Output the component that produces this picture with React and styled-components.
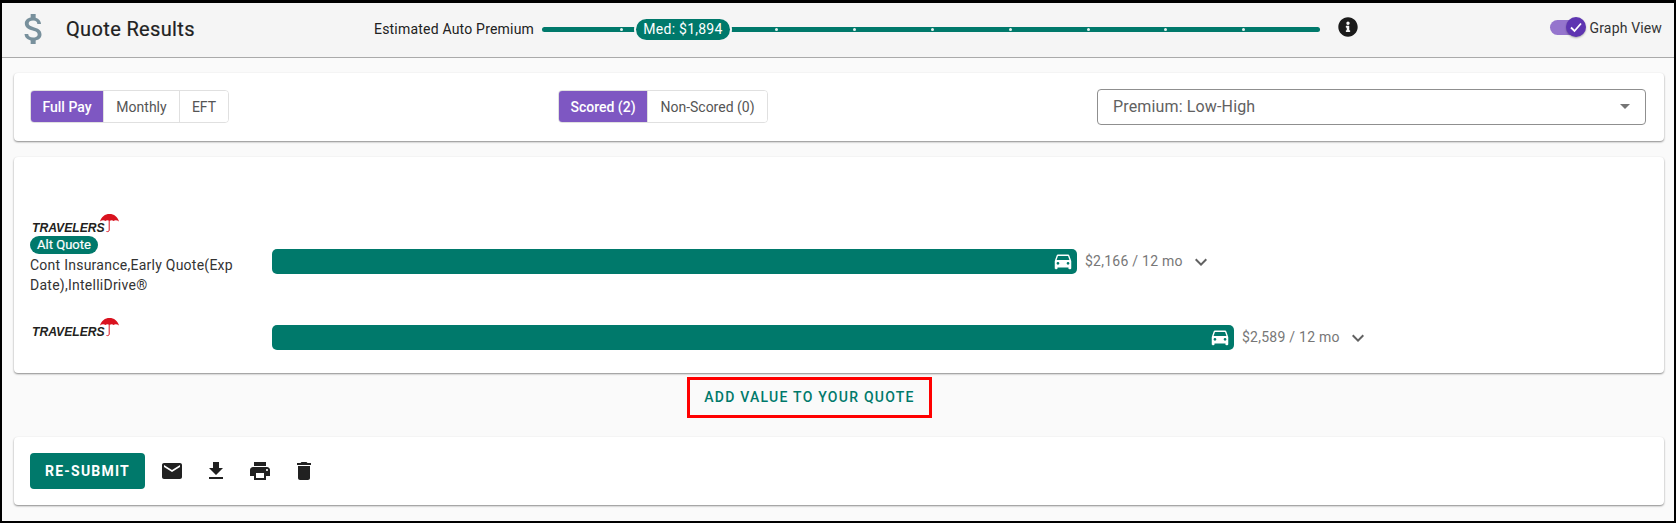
import React from 'react';
import styled, { createGlobalStyle } from 'styled-components';
import { FaInfoCircle } from 'react-icons/fa';

const GREEN = '#00796b';
const PURPLE = '#7e57c2';

const GlobalStyle = createGlobalStyle`
	html, body {
		margin: 0;
		padding: 0;
	}
	body {
		font-family: Roboto, "Liberation Sans", sans-serif;
		background: #fafafa;
	}
	* {
		box-sizing: border-box;
	}
`;

const Page = styled.div`
	width: 1676px;
	height: 523px;
	border: 2px solid #000;
	border-top-width: 3px;
	background: #fafafa;
	overflow: hidden;
`;

const Header = styled.header`
	height: 55px;
	display: flex;
	align-items: center;
	background: #f5f5f5;
	border-bottom: 1px solid #aaa;
	padding: 0 0 3px 12px;
`;

const DollarIcon = styled.svg`
	width: 40px;
	height: 40px;
	margin-top: 1px;
	fill: #78909c;
	flex: none;
`;

const Title = styled.h1`
	width: 308px;
	margin: 0 0 0 12px;
	font-size: 20px;
	font-weight: 400;
	letter-spacing: 0.35px;
	color: #212121;
	-webkit-text-stroke: 0.2px #212121;
`;

const SliderLabel = styled.span`
	width: 168px;
	font-size: 14px;
	letter-spacing: 0.2px;
	color: #212121;
`;

const Track = styled.div`
	position: relative;
	width: 778px;
	height: 5px;
	margin-top: 2px;
	border-radius: 3px;
	background: ${GREEN};
`;

const Tick = styled.i`
	position: absolute;
	top: 1px;
	width: 3px;
	height: 3px;
	border-radius: 50%;
	background: #e4f1ee;
	left: ${(p) => p.$at}px;
`;

const MedPill = styled.div`
	position: absolute;
	left: 94px;
	top: -8px;
	width: 94px;
	height: 21px;
	border-radius: 11px;
	background: ${GREEN};
	color: #fff;
	font-size: 14px;
	line-height: 20px;
	letter-spacing: 0.25px;
	text-align: center;
	box-shadow: 0 0 0 2px #f5f5f5;
`;

const InfoButton = styled.span`
	display: flex;
	margin: -4px 0 0 18px;
	font-size: 20px;
	color: #1a1a1a;
`;

const ToggleWrap = styled.div`
	margin-left: auto;
	display: flex;
	align-items: center;
	margin-right: 12px;
	margin-top: -2px;
`;

const ToggleTrack = styled.div`
	position: relative;
	width: 33px;
	height: 15px;
	border-radius: 8px;
	background: #9575cd;
`;

const ToggleThumb = styled.div`
	position: absolute;
	right: -3px;
	top: -3px;
	width: 20px;
	height: 20px;
	border-radius: 50%;
	background: #5e35b1;
	display: flex;
	align-items: center;
	justify-content: center;
	box-shadow: 0 1px 2px rgba(0, 0, 0, 0.3);
`;

const ToggleLabel = styled.span`
	margin-left: 7px;
	font-size: 14px;
	letter-spacing: 0.15px;
	color: #333;
`;

const Card = styled.section`
	margin: ${(p) => p.$top}px 10px 0 12px;
	background: #fff;
	border-radius: 4px;
	box-shadow: 0 1px 2px rgba(0, 0, 0, 0.45);
`;

const FilterCard = styled(Card)`
	height: 68px;
	display: flex;
	align-items: flex-start;
	padding: 17px 18px 0 16px;
`;

const ButtonGroup = styled.div`
	display: flex;
	height: 33px;
	margin-left: ${(p) => p.$left || 0}px;
	border: 1px solid #e0e0e0;
	border-radius: 4px;
	overflow: hidden;
`;

const GroupButton = styled.div`
	width: ${(p) => p.$w}px;
	display: flex;
	align-items: center;
	justify-content: center;
	font-size: 14px;
	font-weight: ${(p) => (p.$active ? 500 : 400)};
	color: ${(p) => (p.$active ? '#fff' : '#555')};
	background: ${(p) => (p.$active ? PURPLE : '#fff')};
	& + & {
		border-left: 1px solid #e0e0e0;
	}
`;

const SortSelect = styled.div`
	margin: -1px 0 0 auto;
	width: 549px;
	height: 36px;
	display: flex;
	align-items: center;
	justify-content: space-between;
	padding: 0 12px 2px 15px;
	border: 1px solid #8f8f8f;
	border-radius: 4px;
	font-size: 16px;
	letter-spacing: 0.15px;
	color: #616161;
`;

const CaretIcon = styled.svg`
	width: 24px;
	height: 24px;
	fill: #757575;
	margin-right: -4px;
`;

const ResultsCard = styled(Card)`
	height: 216px;
	padding: 57px 0 0 16px;
`;

const QuoteRow = styled.div`
	display: grid;
	grid-template-columns: 242px 1fr;
	align-items: center;
	height: ${(p) => p.$h}px;
`;

const Carrier = styled.div`
	align-self: start;
	padding-top: ${(p) => p.$top || 0}px;
`;

const LogoBox = styled.div`
	position: relative;
	width: 90px;
	height: 22px;
`;

const LogoText = styled.span`
	position: absolute;
	left: 2px;
	bottom: 1px;
	font-family: "Liberation Sans", sans-serif;
	font-size: 13.5px;
	line-height: 14px;
	font-weight: 700;
	font-style: italic;
	color: #231f20;
	transform: scaleX(0.9);
	transform-origin: left center;
`;

const Umbrella = styled.svg`
	position: absolute;
	left: 70px;
	top: 0;
	width: 19px;
	height: 19px;
`;

const AltBadge = styled.div`
	width: 68px;
	height: 18px;
	border-radius: 9px;
	background: ${GREEN};
	color: #fff;
	font-size: 13px;
	line-height: 18px;
	text-align: center;
	-webkit-text-stroke: 0.2px #fff;
`;

const DiscountText = styled.div`
	width: 210px;
	margin-top: 1px;
	font-size: 14px;
	line-height: 20px;
	letter-spacing: 0.25px;
	color: #333;
`;

const BarWrap = styled.div`
	display: flex;
	align-items: center;
`;

const Bar = styled.div`
	height: 25px;
	display: flex;
	align-items: center;
	justify-content: flex-end;
	padding-right: 3px;
	border-radius: 5px;
	background: ${GREEN};
`;

const CarIcon = styled.svg`
	width: 22px;
	height: 22px;
	margin-top: -2px;
	fill: #fff;
`;

const Price = styled.span`
	margin: 0 0 2px 8px;
	font-size: 14px;
	letter-spacing: 0.25px;
	color: #777;
`;

const Chevron = styled.svg`
	width: 24px;
	height: 24px;
	margin-left: 6px;
	fill: #616161;
`;

const AddValue = styled.div`
	width: 245px;
	height: 41px;
	margin: 4px 0 0 685px;
	padding-bottom: 2px;
	display: flex;
	align-items: center;
	justify-content: center;
	border: 3px solid #f00;
	font-size: 14px;
	font-weight: 500;
	letter-spacing: 1.25px;
	color: ${GREEN};
`;

const ActionCard = styled(Card)`
	height: 68px;
	display: flex;
	align-items: center;
	padding-left: 16px;
`;

const SubmitButton = styled.button`
	width: 115px;
	height: 36px;
	border: 0;
	border-radius: 4px;
	background: ${GREEN};
	color: #fff;
	font-family: inherit;
	font-size: 14px;
	font-weight: 700;
	letter-spacing: 1.2px;
	margin-right: 15px;
`;

const ActionIcon = styled.svg`
	width: 24px;
	height: 24px;
	margin-right: 20px;
	fill: #212121;
`;

const TICKS = [1, 3, 4, 5, 6, 7, 8, 9];

const CAR =
	'M18.92 6.01C18.72 5.42 18.16 5 17.5 5h-11c-.66 0-1.21.42-1.42 1.01L3 12v8c0 .55.45 1 1 1h1c.55 0 1-.45 1-1v-1h12v1c0 .55.45 1 1 1h1c.55 0 1-.45 1-1v-8l-2.08-5.99zM6.5 16c-.83 0-1.5-.67-1.5-1.5S5.67 13 6.5 13s1.5.67 1.5 1.5S7.33 16 6.5 16zm11 0c-.83 0-1.5-.67-1.5-1.5s.67-1.5 1.5-1.5 1.5.67 1.5 1.5-.67 1.5-1.5 1.5zM5 11l1.5-4.5h11L19 11H5z';

const ACTIONS = [
	'M20 4H4c-1.1 0-1.99.9-1.99 2L2 18c0 1.1.9 2 2 2h16c1.1 0 2-.9 2-2V6c0-1.1-.9-2-2-2zm0 4l-8 5-8-5V6l8 5 8-5v2z',
	'M19 9h-4V3H9v6H5l7 7 7-7zM5 18v2h14v-2H5z',
	'M19 8H5c-1.66 0-3 1.34-3 3v6h4v4h12v-4h4v-6c0-1.66-1.34-3-3-3zm-3 11H8v-5h8v5zm3-7c-.55 0-1-.45-1-1s.45-1 1-1 1 .45 1 1-.45 1-1 1zm-1-9H6v4h12V3z',
	'M6 19c0 1.1.9 2 2 2h8c1.1 0 2-.9 2-2V7H6v12zM19 4h-3.5l-1-1h-5l-1 1H5v2h14V4z',
];

const Logo = () => (
	<LogoBox>
		<LogoText>TRAVELERS</LogoText>
		<Umbrella viewBox="0 0 19 19">
			<path d="M0 7.5C1.5 2.5 5 0 9.5 0S17.5 2.5 19 7.5C17 6 15 6 13.5 7 12.5 6 11 6 9.5 7 8 6 6.5 6 5.5 7 4 6 2 6 0 7.5z" fill="#d9121f" />
			<path d="M9.2 6.5V16c0 1.5-1.2 1.8-2.7 1.5" fill="none" stroke="#d9121f" strokeWidth="1" />
		</Umbrella>
	</LogoBox>
);

const Quote = ({ width, price }) => (
	<BarWrap>
		<Bar style={{ width }}>
			<CarIcon viewBox="0 0 24 24">
				<path d={CAR} />
			</CarIcon>
		</Bar>
		<Price>{price}</Price>
		<Chevron viewBox="0 0 24 24">
			<path d="M16.59 8.59L12 13.17 7.41 8.59 6 10l6 6 6-6z" />
		</Chevron>
	</BarWrap>
);

const App = () => {
	return (
		<Page>
			<GlobalStyle />
			<Header>
				<DollarIcon viewBox="0 0 24 24">
					<path d="M11.8 10.9c-2.27-.59-3-1.2-3-2.15 0-1.09 1.01-1.85 2.7-1.85 1.78 0 2.44.85 2.5 2.1h2.21c-.07-1.72-1.12-3.3-3.21-3.81V3h-3v2.16c-1.94.42-3.5 1.68-3.5 3.61 0 2.31 1.91 3.46 4.7 4.13 2.5.6 3 1.48 3 2.41 0 .69-.49 1.79-2.7 1.79-2.06 0-2.87-.92-2.98-2.1h-2.2c.12 2.19 1.76 3.42 3.68 3.83V21h3v-2.15c1.95-.37 3.5-1.5 3.5-3.55 0-2.84-2.43-3.81-4.7-4.4z" />
				</DollarIcon>
				<Title>Quote Results</Title>
				<SliderLabel>Estimated Auto Premium</SliderLabel>
				<Track>
					{TICKS.map((n) => (
						<Tick key={n} $at={n * 77.8} />
					))}
					<MedPill>Med: $1,894</MedPill>
				</Track>
				<InfoButton>
					<FaInfoCircle />
				</InfoButton>
				<ToggleWrap>
					<ToggleTrack>
						<ToggleThumb>
							<svg width="14" height="14" viewBox="0 0 14 14">
								<path d="M2 7.5l3.5 3.5L12 3.5" fill="none" stroke="#fff" strokeWidth="1.8" />
							</svg>
						</ToggleThumb>
					</ToggleTrack>
					<ToggleLabel>Graph View</ToggleLabel>
				</ToggleWrap>
			</Header>

			<FilterCard $top={15}>
				<ButtonGroup>
					<GroupButton $active $w={72}>Full Pay</GroupButton>
					<GroupButton $w={76}>Monthly</GroupButton>
					<GroupButton $w={49}>EFT</GroupButton>
				</ButtonGroup>
				<ButtonGroup $left={329}>
					<GroupButton $active $w={88}>Scored (2)</GroupButton>
					<GroupButton $w={120}>Non-Scored (0)</GroupButton>
				</ButtonGroup>
				<SortSelect>
					Premium: Low-High
					<CaretIcon viewBox="0 0 24 24">
						<path d="M7 10l5 5 5-5z" />
					</CaretIcon>
				</SortSelect>
			</FilterCard>

			<ResultsCard $top={16}>
				<QuoteRow $h={95}>
					<Carrier>
						<Logo />
						<AltBadge>Alt Quote</AltBadge>
						<DiscountText>Cont Insurance,Early Quote(Exp Date),IntelliDrive®</DiscountText>
					</Carrier>
					<Quote width={805} price="$2,166 / 12 mo" />
				</QuoteRow>
				<QuoteRow $h={57}>
					<Carrier $top={9}>
						<Logo />
					</Carrier>
					<Quote width={962} price="$2,589 / 12 mo" />
				</QuoteRow>
			</ResultsCard>

			<AddValue>ADD VALUE TO YOUR QUOTE</AddValue>

			<ActionCard $top={19}>
				<SubmitButton>RE-SUBMIT</SubmitButton>
				{ACTIONS.map((d) => (
					<ActionIcon key={d} viewBox="0 0 24 24">
						<path d={d} />
					</ActionIcon>
				))}
			</ActionCard>
		</Page>
	);
};

export default App;
